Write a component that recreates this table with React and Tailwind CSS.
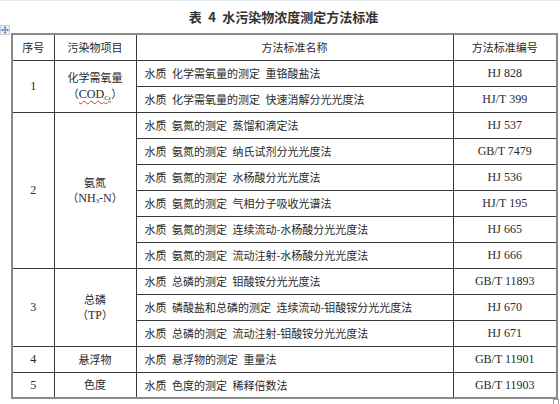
import React from "react";

const cjk = { fontFamily: '"Noto Sans CJK SC", "Noto Sans", sans-serif' };
const serif = { fontFamily: '"Liberation Serif", "Times New Roman", serif' };
const S = "\u2002";

const groups = [
  {
    no: "1",
    name: (
      <>
        <div>化学需氧量</div>
        <div className="mt-[1px]">
          （
          <span style={serif} className="text-[12px] underline decoration-wavy decoration-[#e03030] decoration-1 underline-offset-2">
            COD<sub className="text-[7px] leading-none">Cr</sub>
          </span>
          ）
        </div>
      </>
    ),
    rows: [
      ["水质" + S + "化学需氧量的测定" + S + "重铬酸盐法", "HJ 828"],
      ["水质" + S + "化学需氧量的测定" + S + "快速消解分光光度法", "HJ/T 399"],
    ],
  },
  {
    no: "2",
    name: (
      <>
        <div>氨氮</div>
        <div>
          （<span style={serif} className="text-[12px]">NH<sub className="text-[7px] leading-none">3</sub>-N</span>）
        </div>
      </>
    ),
    rows: [
      ["水质" + S + "氨氮的测定" + S + "蒸馏和滴定法", "HJ 537"],
      ["水质" + S + "氨氮的测定" + S + "纳氏试剂分光光度法", "GB/T 7479"],
      ["水质" + S + "氨氮的测定" + S + "水杨酸分光光度法", "HJ 536"],
      ["水质" + S + "氨氮的测定" + S + "气相分子吸收光谱法", "HJ/T 195"],
      ["水质" + S + "氨氮的测定" + S + "连续流动-水杨酸分光光度法", "HJ 665"],
      ["水质" + S + "氨氮的测定" + S + "流动注射-水杨酸分光光度法", "HJ 666"],
    ],
  },
  {
    no: "3",
    name: (
      <>
        <div>总磷</div>
        <div>
          （<span style={serif} className="text-[12px]">TP</span>）
        </div>
      </>
    ),
    rows: [
      ["水质" + S + "总磷的测定" + S + "钼酸铵分光光度法", "GB/T 11893"],
      ["水质" + S + "磷酸盐和总磷的测定" + S + "连续流动-钼酸铵分光光度法", "HJ 670"],
      ["水质" + S + "总磷的测定" + S + "流动注射-钼酸铵分光光度法", "HJ 671"],
    ],
  },
  {
    no: "4",
    name: <div>悬浮物</div>,
    rows: [["水质" + S + "悬浮物的测定" + S + "重量法", "GB/T 11901"]],
  },
  {
    no: "5",
    name: <div>色度</div>,
    rows: [["水质" + S + "色度的测定" + S + "稀释倍数法", "GB/T 11903"]],
  },
];

const td = "border border-[#3a3a3a] p-0 h-[26px]";

export default function App() {
  return (
    <div className="relative w-[560px] h-[404px] bg-white text-[#2a2a2a] overflow-hidden border-t border-[#e6ebf1]" style={cjk}>
      <div className="ml-[11px] w-[545px] h-[32px] flex items-center justify-center text-[13px] font-bold text-[#333]">
        表{S}4{S}水污染物浓度测定方法标准
      </div>
      <svg className="absolute left-0 top-[24px]" width="10" height="10" viewBox="0 0 10 10">
        <rect x="0.5" y="0.5" width="9" height="9" fill="#f2f4f7" stroke="#c9ced6" />
        <path d="M5 1.5v7M1.5 5h7" stroke="#4a78b8" strokeWidth="1" />
        <path d="M5 1.2l-1.4 1.6h2.8zM5 8.8l-1.4-1.6h2.8zM1.2 5l1.6-1.4v2.8zM8.8 5l-1.6-1.4v2.8z" fill="#4a78b8" />
      </svg>
      <table className="ml-[11px] w-[545px] table-fixed border-collapse border-2 border-[#8a8a8a] text-[11px] leading-[14px]">
        <colgroup>
          <col className="w-[42px]" />
          <col className="w-[82px]" />
          <col className="w-[317px]" />
          <col className="w-[104px]" />
        </colgroup>
        <tbody>
          <tr>
            <td className={td + " text-center"}>序号</td>
            <td className={td + " text-center"}>污染物项目</td>
            <td className={td + " text-center"}>方法标准名称</td>
            <td className={td + " text-center"}>方法标准编号</td>
          </tr>
          {groups.map((g) =>
            g.rows.map((r, i) => (
              <tr key={g.no + "-" + i}>
                {i === 0 && (
                  <>
                    <td rowSpan={g.rows.length} className={td + " text-center text-[12px]"} style={serif}>
                      {g.no}
                    </td>
                    <td rowSpan={g.rows.length} className={td + " text-center leading-[15px]"}>
                      {g.name}
                    </td>
                  </>
                )}
                <td className={td + " pl-[8px] whitespace-nowrap"}>{r[0]}</td>
                <td className={td + " text-center text-[12px]"} style={serif}>
                  {r[1]}
                </td>
              </tr>
            ))
          )}
        </tbody>
      </table>
      <div className="absolute left-[553px] top-[398px] w-[6px] h-[6px] border border-[#9a9a9a] bg-white" />
    </div>
  );
}
